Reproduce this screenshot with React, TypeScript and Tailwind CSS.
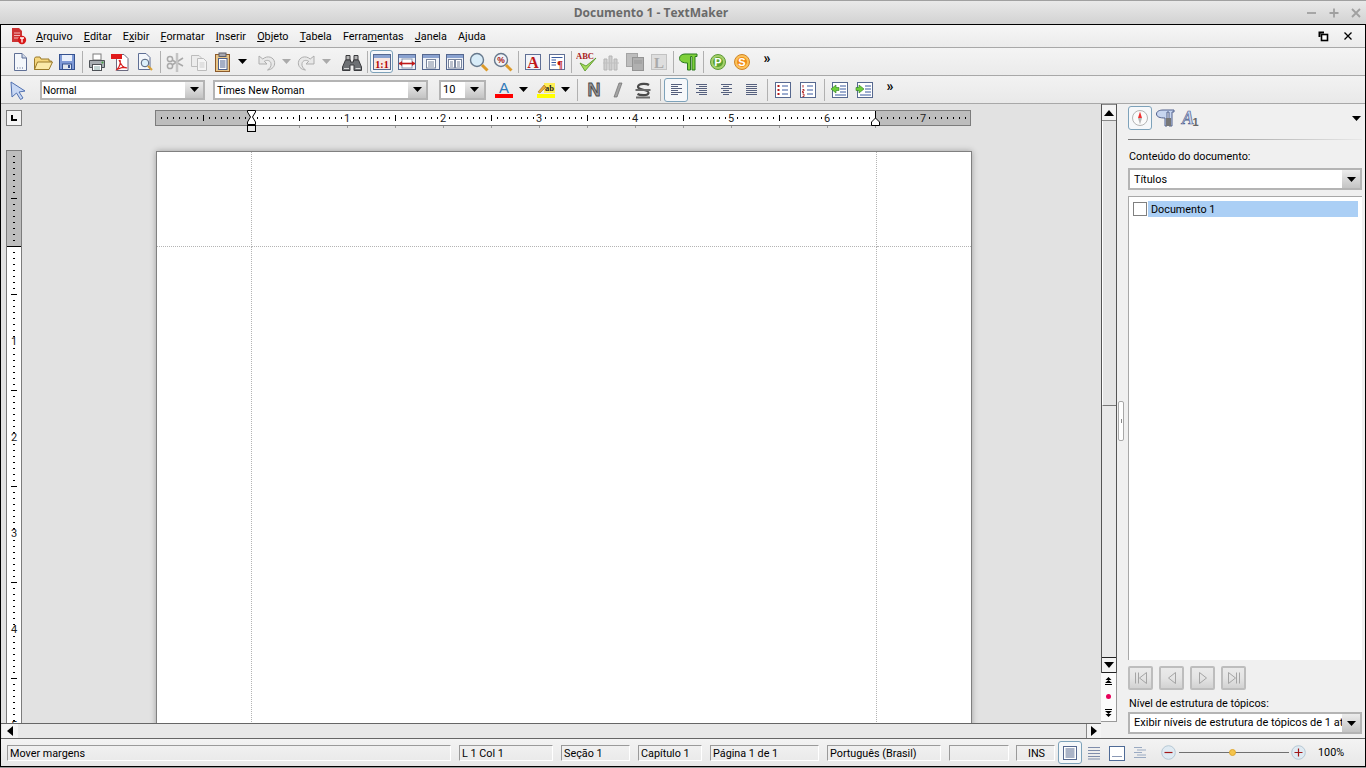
import React from "react";

const F = "font-['Roboto','Liberation_Sans',sans-serif]";

function Ic({ children, w = 22, h = 22 }: { children: React.ReactNode; w?: number; h?: number }) {
  return (
    <svg width={w} height={h} viewBox={`0 0 ${w} ${h}`} className="block flex-none">
      {children}
    </svg>
  );
}

const Arrow = ({ c = "#000" }: { c?: string }) => (
  <Ic w={9} h={5}>
    <path d="M0 0H9L4.5 5Z" fill={c} />
  </Ic>
);

const NewDoc = () => (
  <Ic>
    <path d="M5.5 2.5H13L17.5 7V19.5H5.5Z" fill="#f4f7fb" stroke="#5f6f95" />
    <path d="M13 2.5V7H17.5" fill="#cfd8e8" stroke="#5f6f95" />
    <path d="M8 17h1M10.5 17h1M13 17h1" stroke="#5f6f95" />
  </Ic>
);
const Open = () => (
  <Ic>
    <path d="M2.5 7.5V18.5H16.5L19.5 10H17V8H9L8 6H3.5Z" fill="#f5d67e" stroke="#9a7a2a" />
    <path d="M5.5 11H20.5L17 18.5H2.5Z" fill="#fbe9a9" stroke="#9a7a2a" />
  </Ic>
);
const Save = () => (
  <Ic>
    <rect x="3.5" y="3.5" width="15" height="15" fill="#7f9ad6" stroke="#36528f" />
    <rect x="6" y="4" width="10" height="6" fill="#eaf0fb" />
    <rect x="6.5" y="13" width="9" height="5.5" fill="#dfe5ee" stroke="#36528f" />
    <rect x="12" y="14" width="2" height="3" fill="#36528f" />
  </Ic>
);
const Print = () => (
  <Ic>
    <rect x="7" y="3" width="8" height="6" fill="#fff" stroke="#7d7d7d" />
    <path d="M3.5 9.5H18.5V16.5H3.5Z" fill="#a8adb2" stroke="#4e5257" />
    <rect x="6.5" y="13.5" width="9" height="6" fill="#fff" stroke="#4e5257" />
    <circle cx="16.5" cy="11.5" r="1" fill="#42a13f" />
    <path d="M8 16h6M8 18h6" stroke="#8aa" />
  </Ic>
);
const Pdf = () => (
  <Ic>
    <path d="M6.5 3.5H14L18 7.5V19.5H6.5Z" fill="#fff" stroke="#6a6a80" />
    <rect x="1" y="3" width="11" height="5" fill="#e01a1a" />
    <path d="M9 9C12 16 14 17 17 17C13 15 9 18 7 18.5C10 15 11 12 10 9" fill="none" stroke="#d92020" strokeWidth="1.2" />
  </Ic>
);
const Preview = () => (
  <Ic>
    <path d="M4.5 2.5H12L16 6.5V18.5H4.5Z" fill="#f4f7fb" stroke="#5f6f95" />
    <circle cx="11" cy="12" r="3.8" fill="#dbeefa" stroke="#4f5f7a" />
    <path d="M14 15L18 19" stroke="#d8a23a" strokeWidth="2.2" />
  </Ic>
);
const Cut = () => (
  <Ic>
    <g stroke="#a9a9a9" fill="none" strokeWidth="1.5">
      <circle cx="6" cy="8" r="2.6" />
      <circle cx="6" cy="15" r="2.6" />
      <path d="M8 9L19 15M8 14L19 7" />
    </g>
    <path d="M13 2V21" stroke="#c4c4c4" strokeWidth="2.5" />
  </Ic>
);
const Copy = () => (
  <Ic>
    <path d="M3.5 4.5H11L13 6.5V15.5H3.5Z" fill="#ececec" stroke="#bcbcbc" />
    <path d="M9.5 7.5H15.5L18.5 10.5V19.5H9.5Z" fill="#f4f4f4" stroke="#bcbcbc" />
    <path d="M11.5 12h5M11.5 14h5M11.5 16h5" stroke="#cdcdcd" />
  </Ic>
);
const Paste = () => (
  <Ic>
    <rect x="3.5" y="3.5" width="14" height="17" fill="#e9c689" stroke="#8c5a2a" />
    <rect x="7" y="2" width="7" height="3.5" fill="#a8a8b0" stroke="#5f5f68" />
    <rect x="6.5" y="7.5" width="8.5" height="11" fill="#fff" stroke="#4b5f8c" />
    <path d="M8 10h5.5M8 12h5.5M8 14h5.5M8 16h5.5" stroke="#4b5f8c" />
  </Ic>
);
const Undo = ({ flip }: { flip?: boolean }) => (
  <Ic>
    <g transform={flip ? "translate(22 0) scale(-1 1)" : undefined}>
      <path d="M3 5V13H11L8.3 10.3C11 8.5 14.5 9.5 15 12.5C15.5 15 14 17.5 11.5 19C16 18.6 19 15.5 18.6 11.5C18 6 11.5 4 6.8 8Z" fill="#e8e8e8" stroke="#adadad" />
    </g>
  </Ic>
);
const Binoculars = () => (
  <Ic>
    <g fill="#6d7074" stroke="#3a3b3e">
      <path d="M5 4.5H9V9H5ZM13 4.5H17V9H13Z" fill="#b4b4b4" />
      <path d="M4.5 9H9.5V11H12.5V9H17.5L20.5 16V19.5H13V14H9V19.5H1.5V16Z" />
    </g>
    <path d="M3 17.5H8M14.5 17.5H19.5" stroke="#d8d8d8" />
  </Ic>
);
const WinIcon = ({ children }: { children?: React.ReactNode }) => (
  <Ic>
    <rect x="2.5" y="3.5" width="17" height="15" fill="#eef1f7" stroke="#56688f" />
    <rect x="3" y="4" width="16" height="3" fill="#8aa2d0" />
    {children}
  </Ic>
);
const OneToOne = () => (
  <WinIcon>
    <rect x="3" y="7" width="16" height="11" fill="#f8e7e2" />
    <text x="11" y="16.5" textAnchor="middle" fontSize="10" fontWeight="700" fontFamily="'Liberation Serif',serif" fill="#b40000">
      1:1
    </text>
  </WinIcon>
);
const PageWidth = () => (
  <WinIcon>
    <rect x="6" y="8" width="10" height="9" fill="#fff" stroke="#8b97b0" />
    <path d="M3 12.5H19" stroke="#c01818" strokeWidth="1.6" />
    <path d="M3 12.5L6 10V15ZM19 12.5L16 10V15Z" fill="#c01818" />
  </WinIcon>
);
const PageFull = () => (
  <WinIcon>
    <rect x="6.5" y="8.5" width="9" height="8.5" fill="#fff" stroke="#78849c" />
    <path d="M8 11h6M8 13h6M8 15h6" stroke="#78849c" />
  </WinIcon>
);
const PageTwo = () => (
  <WinIcon>
    <rect x="4.5" y="8.5" width="6" height="8.5" fill="#fff" stroke="#78849c" />
    <rect x="11.5" y="8.5" width="6" height="8.5" fill="#fff" stroke="#78849c" />
    <path d="M6 11h3M6 13h3M6 15h3M13 11h3M13 13h3M13 15h3" stroke="#78849c" />
  </WinIcon>
);
const Magnifier = ({ pct }: { pct?: boolean }) => (
  <Ic>
    <circle cx="9" cy="9" r="6.5" fill={pct ? "#f0f3f8" : "#d8ecf8"} stroke="#66788c" strokeWidth="1.4" />
    <path d="M14 14L19.5 19.5" stroke="#dc9a28" strokeWidth="3" />
    {pct && (
      <text x="9" y="12" textAnchor="middle" fontSize="8.5" fontWeight="700" fontFamily="'Liberation Sans',sans-serif" fill="#a01010">
        %
      </text>
    )}
  </Ic>
);
const BigA = () => (
  <Ic>
    <rect x="3.5" y="3.5" width="15" height="15" fill="#f2f4f9" stroke="#5f6f95" />
    <text x="11" y="17" textAnchor="middle" fontSize="16" fontWeight="700" fontFamily="'Liberation Serif',serif" fill="#c01818">
      A
    </text>
  </Ic>
);
const ParaBox = () => (
  <Ic>
    <rect x="3.5" y="3.5" width="15" height="15" fill="#fff" stroke="#5f6f95" />
    <path d="M5.5 6.5H16.5M5.5 9H10M5.5 11.5H10M5.5 14H10" stroke="#3a5ba0" />
    <text x="14" y="17" textAnchor="middle" fontSize="11" fontWeight="700" fontFamily="'Liberation Serif',serif" fill="#c01818">
      ¶
    </text>
  </Ic>
);
const Spell = () => (
  <Ic w={22}>
    <text x="0" y="8" fontSize="8.5" fontWeight="700" fontFamily="'Liberation Serif',serif" fill="#a82020">
      ABC
    </text>
    <path d="M4 12L9 20L20 7L10 15Z" fill="#a6dc5c" stroke="#4f8f1e" strokeWidth="0.8" />
  </Ic>
);
const Chart = () => (
  <Ic>
    <path d="M4 8H7V19H4ZM9 5H12V19H9ZM14 8H17V19H14Z" fill="#cfcfcf" stroke="#b5b5b5" />
    <path d="M3 12H19" stroke="#c0c0c0" />
  </Ic>
);
const TwoPages = () => (
  <Ic>
    <rect x="2.5" y="2.5" width="11" height="13" fill="#bdbdbd" stroke="#a4a4a4" />
    <rect x="8.5" y="6.5" width="11" height="13" fill="#b0b0b0" stroke="#949494" />
    <path d="M10 10h8M10 12h8" stroke="#999" />
  </Ic>
);
const BoxL = () => (
  <Ic>
    <rect x="3.5" y="3.5" width="15" height="15" fill="#dedede" stroke="#c2c2c2" />
    <text x="11" y="17" textAnchor="middle" fontSize="15" fontWeight="700" fontFamily="'Liberation Serif',serif" fill="#aaa">
      L
    </text>
  </Ic>
);
const Pilcrow = () => (
  <Ic>
    <path d="M8 3H20V5.5H18V19H15V5.5H13.5V19H10.5V12C6 12 2.5 10.5 2.5 7.5C2.5 4.5 5 3 8 3Z" fill="#7fd03a" stroke="#2a7a1e" />
  </Ic>
);
const Round = ({ t, a, b, s }: { t: string; a: string; b: string; s: string }) => (
  <Ic>
    <circle cx="11" cy="11" r="7.5" fill={a} stroke={s} />
    <circle cx="11" cy="11" r="5" fill={b} />
    <text x="11" y="15" textAnchor="middle" fontSize="11" fontWeight="700" fontFamily="'Liberation Sans',sans-serif" fill="#fff">
      {t}
    </text>
  </Ic>
);
const More = () => <div className={`text-[14px] leading-none font-bold text-black mb-[7px] ${F}`}>»</div>;

const Cursor = () => (
  <Ic>
    <path d="M4 3L18 12L12 13L16 19L13.5 20.5L9.5 14L5 18Z" fill="#c8d8f4" stroke="#5070b0" />
  </Ic>
);
const ColorA = () => (
  <Ic w={20}>
    <text x="10" y="14" textAnchor="middle" fontSize="15" fontFamily="'Liberation Sans',sans-serif" fill="#2f79b8">
      A
    </text>
    <rect x="1" y="15" width="18" height="4" fill="#fe0000" />
  </Ic>
);
const Highlight = () => (
  <Ic w={20}>
    <rect x="8" y="4" width="11" height="10" fill="#ffee55" />
    <rect x="1" y="15" width="18" height="4" fill="#ffff00" />
    <path d="M2 13L8 6L10 8L4 14Z" fill="#e8a838" stroke="#a07020" strokeWidth="0.6" />
    <text x="13.5" y="12" textAnchor="middle" fontSize="8.5" fontWeight="700" fontFamily="'Liberation Serif',serif" fill="#222">
      ab
    </text>
  </Ic>
);
const BoldN = () => (
  <Ic>
    <text x="11" y="17" textAnchor="middle" fontSize="18" fontWeight="700" fontFamily="'Liberation Sans',sans-serif" fill="#9a9a9a" stroke="#4a4a4a" strokeWidth="0.9">
      N
    </text>
  </Ic>
);
const ItalicI = () => (
  <Ic>
    <path d="M12 4H15L10 18H7Z" fill="#a4a4a4" stroke="#6f6f6f" strokeWidth="0.7" />
  </Ic>
);
const StrikeS = () => (
  <Ic>
    <path d="M17 6C15 4.5 7 4 6 7.5C5 11 17 10.5 16.5 14C16 17 8 16.5 5.5 15" fill="none" stroke="#4a4a4a" strokeWidth="2.2" />
    <path d="M3.5 11H18.5M4 18.5H18" stroke="#6a6a6a" strokeWidth="1.8" />
  </Ic>
);
const Align = ({ k }: { k: "l" | "r" | "c" | "j" }) => {
  const rows = [0, 1, 2, 3, 4, 5].map((i) => {
    const short = i % 2 === 1;
    const x1 = k === "r" && short ? 9 : k === "c" && short ? 8 : 6;
    const x2 = k === "l" && short ? 13 : k === "c" && short ? 14 : 17;
    return <path key={i} d={`M${x1} ${5.5 + i * 2}H${x2}`} stroke="#55607e" />;
  });
  return <Ic>{rows}</Ic>;
};
const ListB = ({ num }: { num?: boolean }) => (
  <Ic>
    <rect x="3.5" y="3.5" width="15" height="15" fill="#fff" stroke="#56688f" />
    <path d="M10 7H16M10 11H16M10 15H16" stroke="#3a5ba0" />
    {num ? (
      <path d="M6 6V8.5M5.5 10.5H7V12H5.5V13.5H7M5.5 15H7V17.5H5.5" stroke="#b01818" fill="none" strokeWidth="0.9" />
    ) : (
      <path d="M5.5 6h2v2h-2zM5.5 10h2v2h-2zM5.5 14h2v2h-2z" fill="#b01818" />
    )}
  </Ic>
);
const Outdent = ({ right }: { right?: boolean }) => (
  <Ic>
    <rect x="3.5" y="3.5" width="15" height="15" fill="#fff" stroke="#56688f" />
    <path d="M11 7H17M11 10H17M11 13H17M6 16H17" stroke="#3a5ba0" />
    <path d={right ? "M10 10L5 6V8.5H2V11.5H5V14Z" : "M2 10L7 6V8.5H10V11.5H7V14Z"} fill="#6fcf3a" stroke="#2a7a1e" strokeWidth="0.6" />
  </Ic>
);

const Sep = () => (
  <div className="w-[6px] h-[22px] flex-none flex justify-center">
    <div className="w-px h-full bg-[#b0b0b0]" />
  </div>
);

function Slot({ className, children }: { className: string; children: React.ReactNode }) {
  return <div className={`flex-none flex items-center justify-center ${className}`}>{children}</div>;
}

function ActiveBox({ className, children }: { className: string; children: React.ReactNode }) {
  return (
    <div className={`flex-none flex items-center justify-center rounded-[3px] border border-[#7da2ba] bg-[#f6f8fa] ${className}`}>
      {children}
    </div>
  );
}

function Combo({ className, text, boxW, textClass }: { className: string; text: string; boxW: string; textClass: string }) {
  return (
    <div className={`flex-none flex border-2 border-[#b4b4b4] bg-white ${className}`}>
      <div className={`flex-1 min-w-0 overflow-hidden whitespace-nowrap text-black ${textClass}`}>{text}</div>
      <div className={`flex-none flex items-center justify-center bg-gradient-to-b from-[#ececec] to-[#c4c4c4] ${boxW}`}>
        <Arrow />
      </div>
    </div>
  );
}

function Menu() {
  const U = ({ children }: { children: string }) => <span className="underline">{children}</span>;
  return (
    <div className="h-[22px] flex-none flex items-center bg-gradient-to-b from-[#f6f6f6] to-[#ebebeb] border-b border-[#a8a8a8] pr-[10px] box-content">
      <div className="w-[35px] flex-none flex justify-center">
        <Ic w={18} h={18}>
          <path d="M2 1H9L12 4V15H2Z" fill="#cc3333" />
          <path d="M4 6H10M4 8.5H10M4 11H10" stroke="#f4b8b8" />
          <circle cx="12" cy="13" r="4.2" fill="#d81818" />
          <path d="M10 11H14M12 11V15.5" stroke="#fff" strokeWidth="1.3" />
        </Ic>
      </div>
      <div className="flex gap-[11.2px] pt-[2px] text-[10.8px] text-black">
        <span><U>A</U>rquivo</span>
        <span><U>E</U>ditar</span>
        <span>E<U>x</U>ibir</span>
        <span><U>F</U>ormatar</span>
        <span><U>I</U>nserir</span>
        <span><U>O</U>bjeto</span>
        <span><U>T</U>abela</span>
        <span>Ferra<U>m</U>entas</span>
        <span><U>J</U>anela</span>
        <span>A<U>j</U>uda</span>
      </div>
      <div className="ml-auto flex items-center gap-[13px] pr-[1px]">
        <Ic w={12} h={12}>
          <path d="M1.5 1.5H7V3.5H3.5V7H1.5Z" fill="#000" />
          <rect x="4.5" y="4.5" width="6" height="6" fill="#fff" stroke="#000" strokeWidth="1.6" />
        </Ic>
        <Ic w={12} h={12}>
          <path d="M2.5 2.5L9.5 9.5M9.5 2.5L2.5 9.5" stroke="#000" strokeWidth="1.3" />
        </Ic>
      </div>
    </div>
  );
}

function ToolbarOne() {
  return (
    <div className="h-[27px] flex-none flex items-center pl-[7px] bg-gradient-to-b from-[#f4f4f4] to-[#ebebeb] border-b border-[#a8a8a8] box-content">
      <Slot className="w-[23px]"><NewDoc /></Slot>
      <Slot className="w-[24px]"><Open /></Slot>
      <Slot className="w-[24px]"><Save /></Slot>
      <Sep />
      <Slot className="w-[24px]"><Print /></Slot>
      <Slot className="w-[23px]"><Pdf /></Slot>
      <Slot className="w-[25px]"><Preview /></Slot>
      <Sep />
      <Slot className="w-[24px]"><Cut /></Slot>
      <Slot className="w-[24px]"><Copy /></Slot>
      <Slot className="w-[24px]"><Paste /></Slot>
      <Slot className="w-[14px]"><Arrow /></Slot>
      <Slot className="w-[24px] ml-[6px]"><Undo /></Slot>
      <Slot className="w-[14px]"><Arrow c="#aaa" /></Slot>
      <Slot className="w-[26px]"><Undo flip /></Slot>
      <Slot className="w-[14px]"><Arrow c="#aaa" /></Slot>
      <Slot className="w-[24px] ml-[7px]"><Binoculars /></Slot>
      <Sep />
      <ActiveBox className="w-[23px] h-[23px] mr-[1px]"><OneToOne /></ActiveBox>
      <Slot className="w-[25px]"><PageWidth /></Slot>
      <Slot className="w-[24px]"><PageFull /></Slot>
      <Slot className="w-[24px]"><PageTwo /></Slot>
      <Slot className="w-[24px]"><Magnifier /></Slot>
      <Slot className="w-[24px]"><Magnifier pct /></Slot>
      <Sep />
      <Slot className="w-[24px]"><BigA /></Slot>
      <Slot className="w-[23px]"><ParaBox /></Slot>
      <Sep />
      <Slot className="w-[25px]"><Spell /></Slot>
      <Slot className="w-[24px]"><Chart /></Slot>
      <Slot className="w-[24px]"><TwoPages /></Slot>
      <Slot className="w-[22px] ml-px"><BoxL /></Slot>
      <Sep />
      <Slot className="w-[24px]"><Pilcrow /></Slot>
      <Sep />
      <Slot className="w-[24px]"><Round t="P" a="#a6d06a" b="#5ca22e" s="#5f9a3a" /></Slot>
      <Slot className="w-[24px]"><Round t="S" a="#fbc25a" b="#f08c14" s="#d08428" /></Slot>
      <Slot className="w-[26px]"><More /></Slot>
    </div>
  );
}

function ToolbarTwo() {
  return (
    <div className="h-[27px] flex-none flex items-center pl-[6px] bg-gradient-to-b from-[#f2f2f2] to-[#e9e9e9] border-b border-[#a8a8a8] box-content">
      <Slot className="w-[22px]"><Cursor /></Slot>
      <Combo className="w-[165px] h-[20px] ml-[11px]" text="Normal" boxW="w-[18px]" textClass="pl-px text-[10.2px] leading-[17px]" />
      <Combo className="w-[215px] h-[20px] ml-[8px]" text="Times New Roman" boxW="w-[18px]" textClass="pl-[2px] text-[10.4px] leading-[17px]" />
      <Combo className="w-[47px] h-[20px] ml-[11px]" text="10" boxW="w-[19px]" textClass="pl-[2px] text-[11px] leading-[16px]" />
      <Slot className="w-[20px] ml-[8px]"><ColorA /></Slot>
      <Slot className="w-[18px]"><Arrow /></Slot>
      <Slot className="w-[20px] ml-[4px]"><Highlight /></Slot>
      <Slot className="w-[18px]"><Arrow /></Slot>
      <Sep />
      <Slot className="w-[24px] ml-[2px]"><BoldN /></Slot>
      <Slot className="w-[24px]"><ItalicI /></Slot>
      <Slot className="w-[26px]"><StrikeS /></Slot>
      <div className="w-[1px] flex-none" />
      <Sep />
      <ActiveBox className="w-[24px] h-[24px] ml-px"><Align k="l" /></ActiveBox>
      <Slot className="w-[25px]"><Align k="r" /></Slot>
      <Slot className="w-[25px]"><Align k="c" /></Slot>
      <Slot className="w-[25px]"><Align k="j" /></Slot>
      <div className="w-[1px] flex-none" />
      <Sep />
      <Slot className="w-[25px]"><ListB /></Slot>
      <Slot className="w-[25px]"><ListB num /></Slot>
      <div className="w-[1px] flex-none" />
      <Sep />
      <Slot className="w-[25px]"><Outdent /></Slot>
      <Slot className="w-[25px]"><Outdent right /></Slot>
      <Slot className="w-[26px]"><More /></Slot>
    </div>
  );
}

function HRuler() {
  const ticks: React.ReactNode[] = [];
  for (let x = 0; x < 816; x += 6) {
    const k = x - 96;
    if (x < 6 || x > 810) continue;
    const onNum = k % 96 === 0;
    const onLong = ((k % 96) + 96) % 96 === 48;
    if (onNum) continue;
    ticks.push(
      onLong ? (
        <rect key={x} x={x} y={5} width={1} height={6} fill="#000" />
      ) : (
        <rect key={x} x={x} y={7} width={1} height={2} fill="#000" />
      )
    );
  }
  const under: React.ReactNode[] = [];
  for (let x = 144; x < 721; x += 48) under.push(<rect key={x} x={x} y={16} width={1} height={2} fill="#9a9a9a" />);
  return (
    <svg width={816} height={22} viewBox="0 0 816 22" className="block flex-none">
      <rect x="0.5" y="0.5" width="815" height="15" fill="#bdbdbd" stroke="#7c7c7c" />
      <rect x="96" y="1" width="625" height="14" fill="#fff" />
      {ticks}
      {under}
      {[1, 2, 3, 4, 5, 6, 7].map((n) => (
        <text key={n} x={96 + n * 96} y={12} textAnchor="middle" fontSize="11" fontFamily="'Roboto',sans-serif" fill="#222">
          {n}
        </text>
      ))}
      <path d="M92.5 0.5H100.5V2L97.5 7L100.5 12V14.5H92.5V12L95.5 7L92.5 2Z" fill="#fff" stroke="#000" />
      <rect x="92.5" y="15.5" width="8" height="6" fill="#e8e8e8" stroke="#000" />
      <path d="M720.5 1V8" stroke="#000" />
      <path d="M720.5 8L724.5 12V15.5H716.5V12Z" fill="#fff" stroke="#000" />
    </svg>
  );
}

function VRuler() {
  const ticks: React.ReactNode[] = [];
  for (let y = 6; y < 590; y += 6) {
    const k = y - 96;
    if (k % 96 === 0) continue;
    const long = ((k % 96) + 96) % 96 === 48;
    ticks.push(
      long ? (
        <rect key={y} x={5} y={y} width={6} height={1} fill="#000" />
      ) : (
        <rect key={y} x={7} y={y} width={2} height={1} fill="#000" />
      )
    );
  }
  return (
    <svg width={16} height={590} viewBox="0 0 16 590" className="block flex-none">
      <rect x="0.5" y="0.5" width="15" height="600" fill="#fff" stroke="#7c7c7c" />
      <rect x="1" y="1" width="14" height="95" fill="#bdbdbd" />
      <rect x="1" y="96" width="14" height="1" fill="#000" />
      {ticks}
      {[1, 2, 3, 4, 5].map((n) => (
        <text key={n} x={8} y={96 + n * 96 + 3} textAnchor="middle" fontSize="11" fontFamily="'Roboto',sans-serif" fill="#222">
          {n}
        </text>
      ))}
    </svg>
  );
}

function ScrollBtn({ className, children }: { className: string; children: React.ReactNode }) {
  return <div className={`flex-none flex items-center justify-center bg-[#f4f4f4] ${className}`}>{children}</div>;
}

function DocArea() {
  return (
    <div className="w-[1100px] flex-none flex flex-col min-h-0">
      <div className="flex-1 min-h-0 overflow-hidden bg-[#e2e2e2] flex flex-col">
        <div className="h-[46px] flex-none pt-[6px] pl-[5px] flex items-start">
          <div className="w-[16px] h-[16px] flex-none border border-[#7c7c7c] bg-[#f4f4f4] flex items-center justify-center">
            <Ic w={8} h={8}>
              <path d="M1 1V7H7V5H3V1Z" fill="#000" />
            </Ic>
          </div>
          <div className="ml-[133px]">
            <HRuler />
          </div>
        </div>
        <div className="flex flex-1 min-h-0 pl-[5px]">
          <VRuler />
          <div className="ml-[134px] mt-px w-[816px] h-[700px] flex-none bg-white border border-[#808080] shadow-[0_0_6px_rgba(0,0,0,0.3)] grid grid-cols-[95px_625px_1fr] grid-rows-[95px_1fr]">
            <div className="border-r border-b border-dotted border-[#b4b4b4]" />
            <div className="border-r border-b border-dotted border-[#b4b4b4]" />
            <div className="border-b border-dotted border-[#b4b4b4]" />
            <div className="border-r border-dotted border-[#b4b4b4]" />
            <div className="border-r border-dotted border-[#b4b4b4]" />
            <div />
          </div>
        </div>
      </div>
      <div className="h-[14px] flex-none flex border-t border-[#666] bg-[#e8e8e8] box-content">
        <ScrollBtn className="w-[16px] ml-px">
          <Ic w={7} h={10}><path d="M6 0V10L0 5Z" fill="#000" /></Ic>
        </ScrollBtn>
        <div className="flex-1" />
        <ScrollBtn className="w-[15px] border-l border-[#888]">
          <Ic w={7} h={10}><path d="M0 0V10L6 5Z" fill="#000" /></Ic>
        </ScrollBtn>
      </div>
    </div>
  );
}

function VScroll() {
  return (
    <div className="w-[16px] flex-none flex flex-col bg-[#e2e2e2]">
      <div className="h-[569px] flex-none flex flex-col border-x border-[#555]">
        <div className="h-[15px] flex-none flex items-center justify-center bg-[#f4f4f4] border-b border-[#888] border-t box-content">
          <Ic w={10} h={6}><path d="M0 6H10L5 0Z" fill="#000" /></Ic>
        </div>
        <div className="h-[285px] flex-none bg-[#e4e4e4] border-b border-[#777] border-l border-l-white" />
        <div className="flex-1 bg-[#e9e9e9]" />
        <div className="h-[16px] flex-none flex items-center justify-center bg-[#f4f4f4] border-y border-[#222]">
          <Ic w={10} h={6}><path d="M0 0H10L5 6Z" fill="#000" /></Ic>
        </div>
      </div>
      <div className="w-[16px] h-[49px] flex-none flex flex-col bg-[#fbfbfb] border-r border-b border-[#9a9a9a]">
        <div className="h-[15px] flex items-center justify-center">
          <Ic w={7} h={8}>
            <path d="M3.5 0L6.5 3H0.5ZM3.5 3L7 6H0ZM0 7H7V8H0Z" fill="#000" />
          </Ic>
        </div>
        <div className="h-[16px] flex items-center justify-center">
          <div className="w-[5px] h-[5px] rounded-full bg-[#e8005a]" />
        </div>
        <div className="flex-1 flex items-center justify-center">
          <Ic w={7} h={8}>
            <path d="M0 0H7V1H0ZM0 2H7L3.5 5ZM0.5 5H6.5L3.5 8Z" fill="#000" />
          </Ic>
        </div>
      </div>
      <div className="flex-1 bg-[#f0f0f0]" />
    </div>
  );
}

function NavBtn({ d }: { d: string }) {
  return (
    <div className="w-[25px] h-[24px] flex-none rounded-[2px] border-2 border-[#bdbdbd] bg-gradient-to-b from-[#eaeaea] via-[#e4e4e4] to-[#d2d2d2] flex items-center justify-center">
      <Ic w={16} h={16}>
        <path d={d} fill="none" stroke="#a4a4a4" />
      </Ic>
    </div>
  );
}

function SidePanel() {
  return (
    <div className="flex-1 min-w-0 flex bg-[#f0f0f0]">
      <div className="w-[11px] flex-none flex items-center justify-start pl-px">
        <div className="w-[6px] h-[40px] rounded-[2px] border border-[#a8a8a8] bg-white flex items-center justify-center">
          <span className="block w-px h-[4px] bg-[#888]" />
        </div>
      </div>
      <div className="flex-1 min-w-0 flex flex-col pr-[3px] pt-[2px]">
        <div className="h-[24px] flex-none flex items-center gap-[1px]">
          <div className="w-[24px] h-[24px] flex-none rounded-[3px] border border-[#7da2ba] bg-[#f6f8fa] flex items-center justify-center">
            <Ic w={18} h={18}>
              <circle cx="9" cy="9" r="7.5" fill="#fbfbfb" stroke="#b4b4b4" />
              <path d="M9 2.5L11 9H7Z" fill="#f03030" />
              <path d="M9 15.5L11 9H7Z" fill="#b8b8b8" />
            </Ic>
          </div>
          <Slot className="w-[24px]">
            <Ic>
              <path d="M9 3H20V5H18V19H15V5H13V19H11V11C6 11 2.5 10 2.5 7C2.5 4 6 3 9 3Z" fill="#c8d6f0" stroke="#51618d" />
              <path d="M12 11H17V19H12Z" fill="#777" />
            </Ic>
          </Slot>
          <Slot className="w-[24px]">
            <Ic>
              <text x="9" y="17" textAnchor="middle" fontSize="18" fontWeight="700" fontStyle="italic" fontFamily="'Liberation Serif',serif" fill="#c8d6f0" stroke="#51618d" strokeWidth="0.7">
                A
              </text>
              <text x="16.5" y="19" textAnchor="middle" fontSize="11" fontWeight="700" fontFamily="'Liberation Sans',sans-serif" fill="#666">
                1
              </text>
            </Ic>
          </Slot>
          <div className="ml-auto pr-[1px]">
            <Arrow />
          </div>
        </div>
        <div className="h-px mt-[9px] flex-none bg-gradient-to-r from-[#7a7a7a] to-[#e8e8e8]" />
        <div className="mt-[9px] pl-px text-[10.8px] leading-[15px] text-black">Conteúdo do documento:</div>
        <Combo className="w-full h-[22px] mt-[4px]" text="Títulos" boxW="w-[18px]" textClass="pl-[4px] text-[10.8px] leading-[20px]" />
        <div className="flex-1 min-h-0 mt-[6px] bg-white border-l border-t border-[#a8a8a8] pt-[4px] pl-[4px] pr-[4px]">
          <div className="flex items-center h-[16px]">
            <div className="w-[14px] h-[14px] flex-none border border-[#808080] bg-white" />
            <div className="flex-1 h-[16px] ml-px bg-[#abcff5] pl-[3px] text-[10.8px] leading-[18px] text-black">Documento 1</div>
          </div>
        </div>
        <div className="h-[24px] flex-none mt-[6px] flex gap-[6px]">
          <NavBtn d="M2.5 2.5V13.5M5.5 2.5V13.5M13.5 2.5V13.5L6.5 8L13.5 2.5" />
          <NavBtn d="M11.5 2.5V13.5L4.5 8Z" />
          <NavBtn d="M4.5 2.5V13.5L11.5 8Z" />
          <NavBtn d="M2.5 2.5V13.5L9.5 8ZM10.5 2.5V13.5M13.5 2.5V13.5" />
        </div>
        <div className="mt-[6px] pl-px text-[10.8px] leading-[15px] text-black">Nível de estrutura de tópicos:</div>
        <Combo className="w-full h-[22px] mt-[1px]" text="Exibir níveis de estrutura de tópicos de 1 até 9" boxW="w-[18px]" textClass="pl-[4px] text-[11px] leading-[18px]" />
        <div className="h-[4px] flex-none" />
      </div>
    </div>
  );
}

function Cell({ className, children }: { className: string; children?: React.ReactNode }) {
  return (
    <div className={`flex-none h-[16px] border border-t-[#9a9a9a] border-l-[#9a9a9a] border-r-white border-b-white pl-[2px] text-[10.8px] leading-[16px] text-black whitespace-nowrap ${className}`}>
      {children}
    </div>
  );
}

const ViewLines = ({ c = "#56688f" }: { c?: string }) => (
  <Ic w={16} h={16}>
    <path d="M2 2.5H14M2 5.5H14M2 8.5H14M2 11.5H14M2 14H14" stroke={c} />
  </Ic>
);

function ZoomBtn({ sign }: { sign: string }) {
  return (
    <Ic w={15} h={15}>
      <circle cx="7.5" cy="7.5" r="6.8" fill="#dfeaf2" stroke="#b6c8d4" />
      <path d={sign === "+" ? "M3.5 7.5H11.5M7.5 3.5V11.5" : "M3.5 7.5H11.5"} stroke="#a01818" strokeWidth="1.2" />
    </Ic>
  );
}

function StatusBar() {
  return (
    <div className="h-[27px] flex-none flex items-center pl-[6px] border-t border-[#666] bg-gradient-to-b from-[#f3f3f3] to-[#e8e8e8] box-content gap-[8px]">
      <Cell className="w-[444px]">Mover margens</Cell>
      <Cell className="w-[94px]">L 1 Col 1</Cell>
      <Cell className="w-[69px]">Seção 1</Cell>
      <Cell className="w-[64px]">Capítulo 1</Cell>
      <Cell className="w-[109px]">Página 1 de 1</Cell>
      <Cell className="w-[114px]">Português (Brasil)</Cell>
      <Cell className="w-[60px]" />
      <Cell className="w-[39px] ml-[-1px] text-center">INS</Cell>
      <div className="flex items-center ml-[-5px]">
        <ActiveBox className="w-[24px] h-[23px]">
          <Ic w={16} h={16}>
            <rect x="1.5" y="1.5" width="13" height="13" fill="#fff" stroke="#56688f" />
            <path d="M3.5 4H12.5M3.5 6H12.5M3.5 8H12.5M3.5 10H12.5M3.5 12H12.5" stroke="#56688f" />
          </Ic>
        </ActiveBox>
        <div className="w-[23px] flex justify-center"><ViewLines c="#7f8dab" /></div>
        <div className="w-[24px] flex justify-center">
          <Ic w={16} h={16}>
            <rect x="0.5" y="1.5" width="15" height="14" fill="#fff" stroke="#4e6a96" />
            <path d="M3 11.5H13" stroke="#8a98b4" />
          </Ic>
        </div>
        <div className="w-[22px] flex justify-center">
          <Ic w={16} h={16}>
            <path d="M2 2.5H10M5 5H14M2 7.5H10M5 10H14M2 12.5H14" stroke="#9aaac2" />
          </Ic>
        </div>
      </div>
      <div className="flex items-center ml-[2px]">
        <ZoomBtn sign="-" />
        <div className="relative w-[110px] ml-[3px] mr-[2px] h-px bg-[#707070]">
          <div className="absolute left-[50px] top-[-3px] w-[7px] h-[7px] rounded-full bg-[#f4c44c] border border-[#e0a830]" />
        </div>
        <ZoomBtn sign="+" />
      </div>
      <div className="ml-[4px] text-[10.8px] leading-[16px] text-black">100%</div>
    </div>
  );
}

export default function App() {
  return (
    <div className={`w-[1366px] h-[768px] overflow-hidden flex flex-col bg-[#f0f0f0] ${F}`}>
      <div className="h-[24px] flex-none flex items-center relative bg-gradient-to-b from-[#e9e9e9] to-[#d2d2d2] border-t border-[#a0a0a0]">
        <div className="w-full pr-[64px] text-center text-[12px] font-bold text-[#6a6a6a] font-['Open_Sans',sans-serif]">Documento 1 - TextMaker</div>
        <div className="absolute right-[4px] top-[6px] flex gap-[10px]">
          <Ic w={12} h={12}><path d="M1 6H10" stroke="#a0a0a0" strokeWidth="1.8" /></Ic>
          <Ic w={12} h={12}><path d="M1.5 6H10.5M6 1.5V10.5" stroke="#a0a0a0" strokeWidth="1.8" /></Ic>
          <Ic w={12} h={12}><path d="M2 2L10 10M10 2L2 10" stroke="#a0a0a0" strokeWidth="1.8" /></Ic>
        </div>
      </div>
      <div className="flex-1 min-h-0 flex flex-col border border-black">
        <Menu />
        <ToolbarOne />
        <ToolbarTwo />
        <div className="flex-1 min-h-0 flex">
          <DocArea />
          <VScroll />
          <SidePanel />
        </div>
        <StatusBar />
      </div>
      <div className="h-px flex-none bg-[#9a9a9a]" />
    </div>
  );
}
